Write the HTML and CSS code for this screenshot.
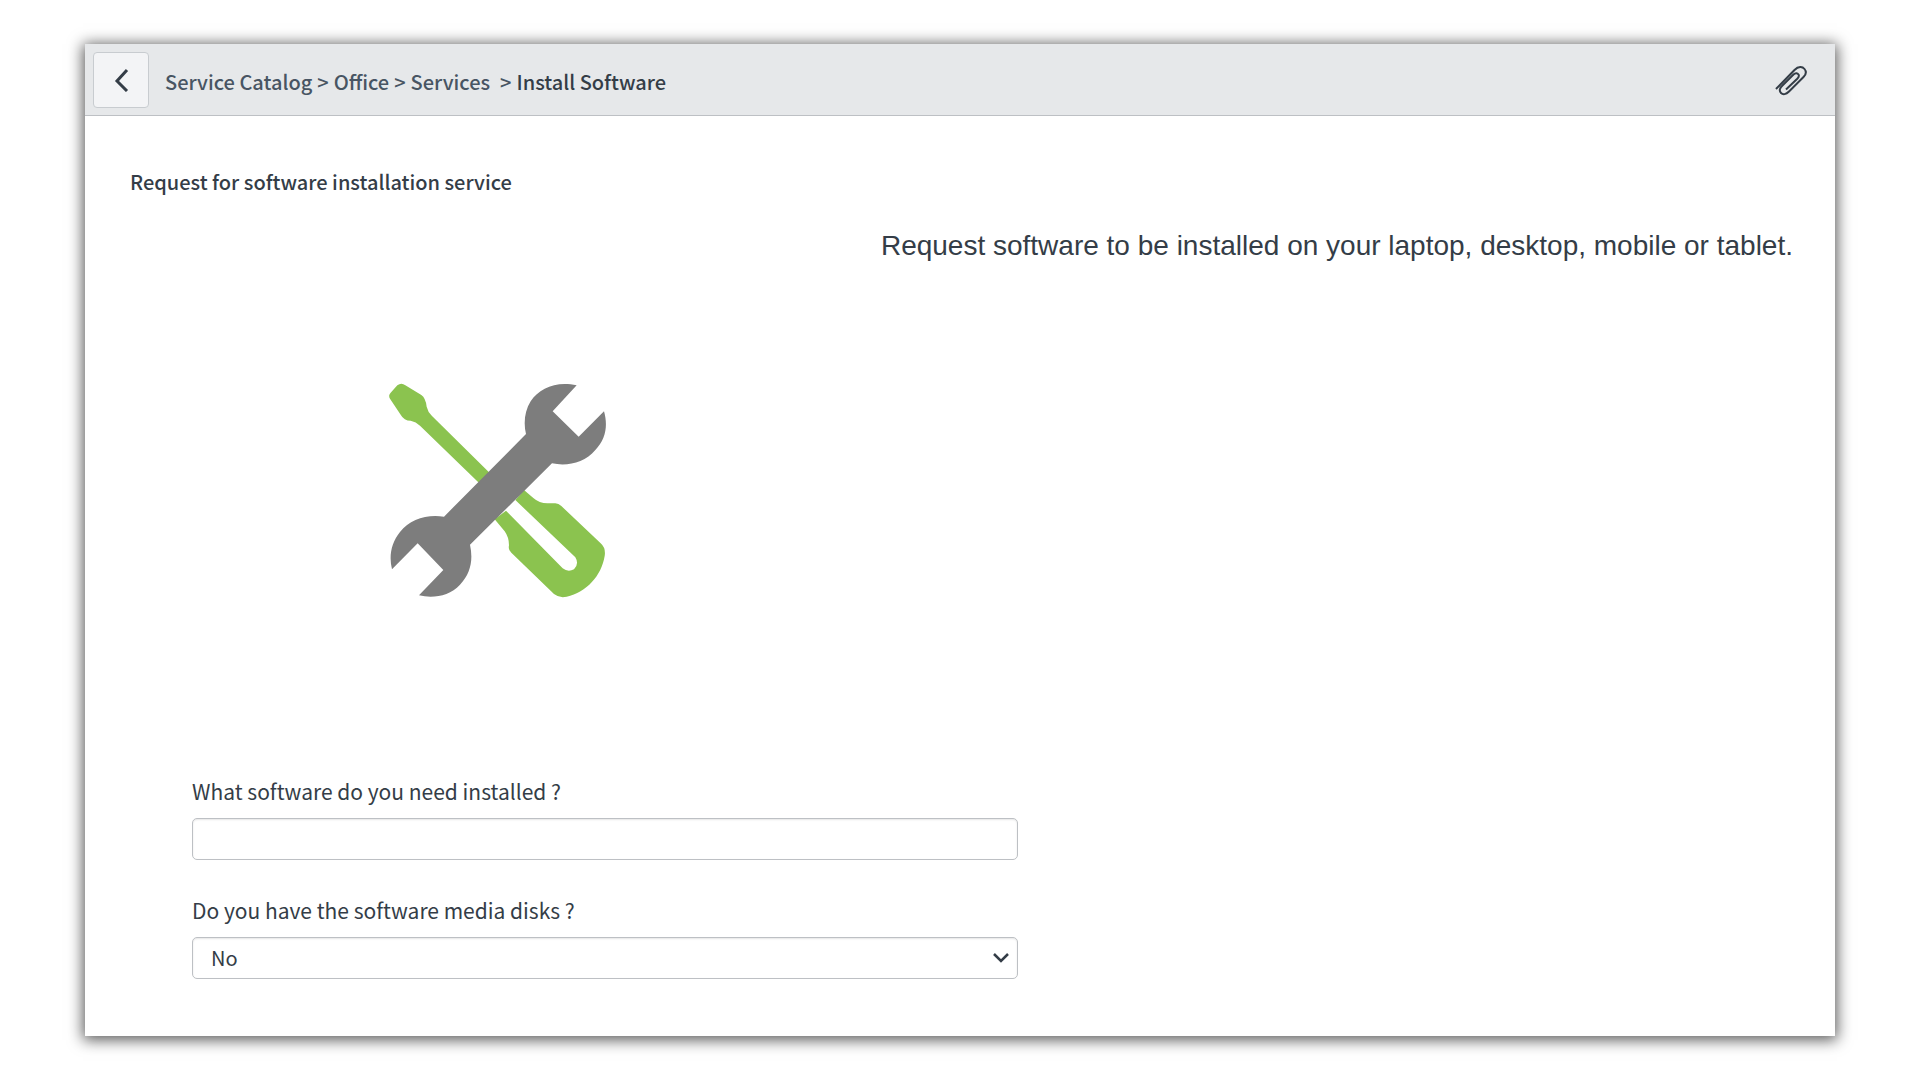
FILE: index.html
```html
<!DOCTYPE html>
<html lang="en">
<head>
<meta charset="utf-8">
<meta name="viewport" content="width=device-width, initial-scale=1">
<title>Install Software</title>
<link rel="stylesheet" href="styles.css">
</head>
<body>
<main class="panel">
  <header class="bar">
    <button class="back" type="button" aria-label="Back">
      <svg width="16" height="24" viewBox="0 0 16 24" aria-hidden="true"><path d="M14 2 4 13l10 10" fill="none" stroke="currentColor" stroke-width="3"/></svg>
    </button>
    <nav class="crumbs" aria-label="Breadcrumb">
      <a href="#">Service Catalog</a><span>&gt;</span><a href="#">Office</a><span>&gt;</span><a href="#">Services</a><span class="last">&gt;</span><span class="current">Install Software</span>
    </nav>
    <button class="attach" type="button" aria-label="Add attachment">
      <svg width="34" height="32" viewBox="0 0 34 32" aria-hidden="true"><path d="M1 24 L19.500 5 C23.500 1 27.500 1.500 29.500 4 C31.500 6.500 31 9.500 28.500 12 L14 26.500 C11 29.500 8 30 6 28 C4 26 4.500 23 7.500 20.500 L18.500 9.500 C20.500 7.500 22.500 8 23.500 9.500 C24.500 11 23.500 12.500 22 14 L11 24.500" fill="none" stroke="currentColor" stroke-width="2"/></svg>
    </button>
  </header>
  <section class="intro">
    <h1 class="title">Request for software installation service</h1>
    <p class="description">Request software to be installed on your laptop, desktop, mobile or tablet.</p>
    <svg class="tools" viewBox="0 0 750 750" role="img" aria-label="Wrench and screwdriver">
      <path class="driver" d="M82 76Q94 67 106 76L154 105Q167 114 170 140Q173 155 186 168L360 340 328 370 150 197Q138 185 122 182Q102 182 92 164L60 116Q54 106 62 98Z"/>
      <path class="driver" d="M462 390L490 414Q508 430 532 430H552Q564 428 574 438L692 550Q708 564 704 588C694 648 650 696 590 710Q568 715 552 702L424 578Q414 570 417 556Q417 532 404 514L374 478 408 452 578 625Q594 638 612 628Q628 612 616 592L436 420Z"/>
      <path class="wrench" d="M620 76C560 62 508 84 482 124C464 152 460 190 468 222L222 470C170 462 120 478 90 516C64 548 56 588 66 628L143 550 220 630 147 706C190 716 238 708 270 674C302 640 310 600 300 554L546 310C592 320 644 308 676 270C708 236 714 196 702 154L626 230 548 154Z"/>
    </svg>
  </section>
  <form class="form">
    <div class="field">
      <label for="software">What software do you need installed ?</label>
      <input class="control" id="software" type="text">
    </div>
    <div class="field">
      <label for="media">Do you have the software media disks ?</label>
      <div class="picker">
        <select class="control" id="media"><option selected>No</option><option>Yes</option></select>
        <svg class="arrow" width="18" height="12" viewBox="0 0 18 12" aria-hidden="true"><path d="M2 2l7 7 7-7" fill="none" stroke="currentColor" stroke-width="2.500"/></svg>
      </div>
    </div>
  </form>
</main>
</body>
</html>
```
FILE: styles.css
```css
* { box-sizing: border-box; }

body {
  margin: 0;
  padding: 44px 85px;
  background: #fff;
  color: #343d47;
  font-family: "Noto Sans CJK SC", "Noto Sans", sans-serif;
  font-size: 20px;
  line-height: 28px;
}

.panel {
  padding-bottom: 57px;
  background: #fff;
  box-shadow: 0 2px 14px 2px rgba(0, 0, 0, .65);
}

.bar {
  display: flex;
  align-items: center;
  gap: 16px;
  height: 72px;
  padding: 0 26px 0 8px;
  background: #e6e8ea;
  border-bottom: 1px solid #bdc0c4;
}

.back {
  display: grid;
  place-items: center;
  width: 56px;
  height: 56px;
  padding: 0;
  color: #343d47;
  background: #f3f4f6;
  border: 1px solid #c8ccd0;
  border-radius: 4px;
}

.crumbs {
  display: flex;
  flex: 1;
  gap: 5px;
  padding-top: 4px;
  color: #485563;
  font-weight: 500;
}

.crumbs a {
  color: inherit;
  text-decoration: none;
}

.crumbs .last { margin-left: 5px; }

.crumbs .current { color: #343d47; }

.attach {
  display: grid;
  padding: 2px 0 0;
  color: #343d47;
  background: none;
  border: 0;
}

.intro {
  display: flex;
  flex-direction: column;
  padding: 52px 42px 0 45px;
}

.title {
  margin: 0;
  font-size: 20px;
  line-height: 28px;
  font-weight: 500;
}

.description {
  margin: 32px 0 0;
  font-family: "Liberation Sans", Arial, sans-serif;
  font-size: 28px;
  line-height: 36px;
  text-align: right;
}

.tools {
  width: 250px;
  height: 250px;
  margin: 96px 0 0 240px;
}

.driver { fill: #8bc34f; }
.wrench { fill: #7d7d7d; }

.form {
  display: flex;
  flex-direction: column;
  gap: 36px;
  padding: 167px 107px 0;
}

.field {
  display: flex;
  flex-direction: column;
  gap: 13px;
  width: 100%;
  max-width: 826px;
}

.field label { font-size: 21px; }

.control {
  width: 100%;
  height: 42px;
  padding: 0 18px;
  color: inherit;
  background: #fff;
  border: 1px solid #bdc0c4;
  border-radius: 5px;
  box-shadow: inset 0 1px 2px rgba(0, 0, 0, .1);
  font: inherit;
  appearance: none;
}

.picker {
  display: grid;
  align-items: center;
}

.picker > * { grid-area: 1 / 1; }

.arrow {
  justify-self: end;
  margin-right: 8px;
  pointer-events: none;
}
```
